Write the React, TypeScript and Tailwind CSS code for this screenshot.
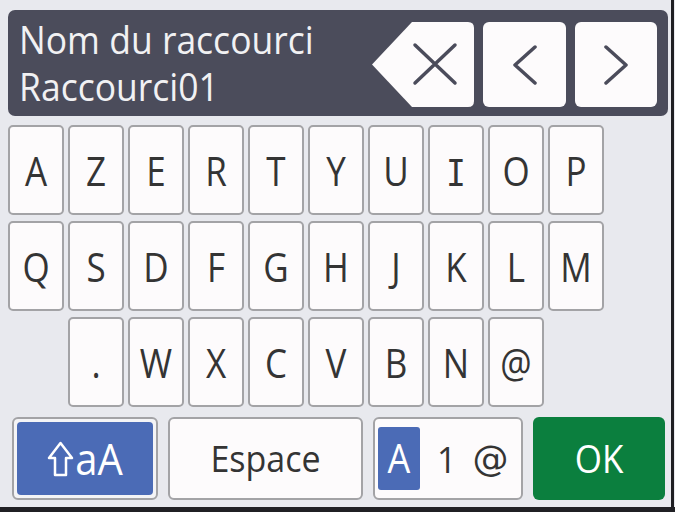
import React from 'react';

const row1 = ['A', 'Z', 'E', 'R', 'T', 'Y', 'U', 'I', 'O', 'P'];
const row2 = ['Q', 'S', 'D', 'F', 'G', 'H', 'J', 'K', 'L', 'M'];
const row3 = ['.', 'W', 'X', 'C', 'V', 'B', 'N', '@'];

// the device font draws a serifed capital I
const Key: React.FC<{ label: string }> = ({ label }) => (
  <div className="w-[56px] h-[90px] shrink-0 rounded-[5px] border-2 border-[#a3a3a6] bg-[#fdfbfc] flex items-center justify-center text-[35px] leading-none text-[#343434]">
    {label === 'I' ? (
      <span
        className="inline-block translate-y-[3px] scale-y-[1.12] text-[33px]"
        style={{ fontFamily: '"DejaVu Sans Mono", monospace' }}
      >
        I
      </span>
    ) : (
      <span className="inline-block scale-y-[1.15]">{label}</span>
    )}
  </div>
);

const App: React.FC = () => {
  return (
    <div
      className="w-[675px] h-[512px] flex flex-col bg-[#e8e9ee] overflow-hidden"
      style={{ fontFamily: '"Open Sans", "Noto Sans", sans-serif' }}
    >
      <div className="flex flex-1">
        <div className="w-[671px] flex flex-col pt-[10px] pl-[8px]">
          {/* header with input and edit buttons */}
          <div className="w-[660px] h-[106px] rounded-[7px] bg-[#4b4c5b] flex">
            <div className="flex-1 pl-[11px] pt-[6px] text-[35.5px] leading-[47px] text-[#f1f1f3]">
              <div className="origin-left scale-y-[1.08]">Nom du raccourci</div>
              <div className="origin-left scale-y-[1.08]">Raccourci01</div>
            </div>
            <div className="flex items-start gap-[9px] pt-[12px] pr-[11px]">
              <svg width="102" height="85" viewBox="0 0 102 85">
                <path d="M40 0 H96 Q102 0 102 6 V79 Q102 85 96 85 H40 L0 42.5 Z" fill="#fdfbfc" />
                <path d="M43 23 L83 61 M83 23 L43 61" stroke="#4b4c5b" strokeWidth="3.5" strokeLinecap="round" />
              </svg>
              <div className="w-[83px] h-[85px] rounded-[6px] bg-[#fdfbfc] flex items-center justify-center">
                <svg width="26" height="40" viewBox="0 0 26 40">
                  <polyline points="23,2 3,20 23,38" fill="none" stroke="#4b4c5b" strokeWidth="3.5" strokeLinecap="round" strokeLinejoin="round" />
                </svg>
              </div>
              <div className="w-[82px] h-[85px] rounded-[6px] bg-[#fdfbfc] flex items-center justify-center">
                <svg width="26" height="40" viewBox="0 0 26 40">
                  <polyline points="3,2 23,20 3,38" fill="none" stroke="#4b4c5b" strokeWidth="3.5" strokeLinecap="round" strokeLinejoin="round" />
                </svg>
              </div>
            </div>
          </div>

          {/* letter keys */}
          <div className="mt-[9px] flex flex-col gap-[6px]">
            <div className="flex gap-[4px]">
              {row1.map((k) => <Key key={k} label={k} />)}
            </div>
            <div className="flex gap-[4px]">
              {row2.map((k) => <Key key={k} label={k} />)}
            </div>
            <div className="flex gap-[4px] pl-[60px]">
              {row3.map((k) => <Key key={k} label={k} />)}
            </div>
          </div>

          {/* bottom row */}
          <div className="mt-[10px] ml-[4px] flex gap-[10px] h-[83px]">
            <div className="w-[146px] rounded-[6px] border-2 border-[#a3a3a6] bg-[#f4f4f6] p-[3px]">
              <div className="h-full rounded-[4px] bg-[#4b6bb6] flex items-center justify-center gap-[1px] text-white">
                <svg width="27" height="36" viewBox="0 0 27 36">
                  <path d="M13.5 2 L25 17 H19 V34 H8 V17 H2 Z" fill="none" stroke="#ffffff" strokeWidth="2.5" strokeLinejoin="round" />
                </svg>
                <span className="inline-block text-[40px] leading-none scale-y-[1.08]">aA</span>
              </div>
            </div>
            <div className="w-[195px] rounded-[6px] border-2 border-[#a3a3a6] bg-[#fdfbfc] flex items-center justify-center text-[34px] text-[#343434]">
              <span className="inline-block scale-y-[1.1]">Espace</span>
            </div>
            <div className="w-[150px] rounded-[6px] border-2 border-[#a3a3a6] bg-[#fdfbfc] flex items-center pl-[3px] text-[34px] text-[#343434]">
              <div className="w-[42px] h-[63px] rounded-[3px] bg-[#4b6bb6] flex items-center justify-center text-white text-[36px]">
                <span className="inline-block scale-y-[1.1]">A</span>
              </div>
              <span className="ml-[17px] leading-none inline-block scale-y-[1.1]">1</span>
              <span className="ml-[16px] leading-none text-[36px]" style={{ fontFamily: '"DejaVu Sans", sans-serif' }}>@</span>
            </div>
            <div className="w-[132px] rounded-[6px] bg-[#0b7f3e] flex items-center justify-center text-white text-[35px]">
              <span className="inline-block scale-y-[1.12]">OK</span>
            </div>
          </div>
        </div>
        <div className="w-[3px] bg-[#1f1f23]" />
      </div>
      <div className="h-[5px] bg-[#202024]" />
    </div>
  );
};

export default App;
